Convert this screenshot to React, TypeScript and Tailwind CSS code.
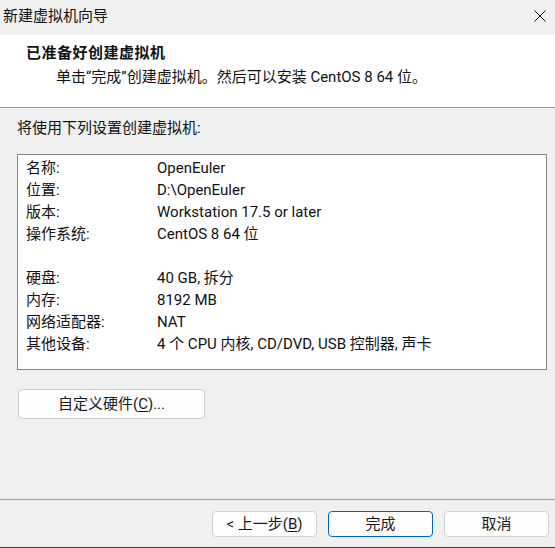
const rows: [string, string][] = [
  ["名称:", "OpenEuler"],
  ["位置:", "D:\\OpenEuler"],
  ["版本:", "Workstation 17.5 or later"],
  ["操作系统:", "CentOS 8 64 位"],
  ["", ""],
  ["硬盘:", "40 GB, 拆分"],
  ["内存:", "8192 MB"],
  ["网络适配器:", "NAT"],
  ["其他设备:", "4 个 CPU 内核, CD/DVD, USB 控制器, 声卡"],
];

function WinButton({ children, primary }: { children: React.ReactNode; primary?: boolean }) {
  return (
    <button
      className={
        primary
          ? "w-[105px] h-[26px] rounded-[4px] border border-[#0067c0] bg-[#fdfdfd] text-[15px] leading-none text-[#1a1a1a]"
          : "w-[105px] h-[26px] rounded-[4px] border border-[#d0d0d0] bg-[#fdfdfd] text-[15px] leading-none text-[#1a1a1a]"
      }
    >
      {children}
    </button>
  );
}

export default function App() {
  return (
    <div
      className="w-[555px] h-[548px] bg-[#f0f0f0] flex flex-col text-[#111] text-[15px] border-b border-[#3c3c3c] overflow-hidden"
      style={{ fontFamily: 'Roboto, "Noto Sans CJK SC", sans-serif' }}
    >
      {/* title bar */}
      <div className="h-[35px] flex items-center justify-between pl-[3px] pr-[9px] bg-[#f0f0f0]">
        <span className="leading-[22px] -mt-[3px]">新建虚拟机向导</span>
        <svg width="12" height="12" viewBox="0 0 12 12" className="-mt-[3px]">
          <path d="M0.5 0.5 L11.5 11.5 M11.5 0.5 L0.5 11.5" stroke="#1a1a1a" strokeWidth="1" fill="none" />
        </svg>
      </div>

      {/* header */}
      <div className="h-[73px] bg-white border-b border-[#a0a0a0] pt-[7px] pl-[26px] flex flex-col gap-[2px]">
        <div className="leading-[22px] font-bold tracking-[0.5px]">已准备好创建虚拟机</div>
        <div className="leading-[22px] pl-[30px]">单击“完成”创建虚拟机。然后可以安装 CentOS 8 64 位。</div>
      </div>

      {/* body */}
      <div className="flex-1 flex flex-col pt-[9px] pl-[17px] pr-[8px]">
        <div className="leading-[22px]">将使用下列设置创建虚拟机:</div>
        <div className="mt-[15px] h-[216px] border border-[#828790] bg-white pt-[2px] pl-[8px]">
          {rows.map(([k, v], i) => (
            <div key={i} className="flex h-[22px] leading-[22px]">
              <span className="w-[131px] shrink-0">{k}</span>
              <span>{v}</span>
            </div>
          ))}
        </div>
        <button className="mt-[19px] ml-px w-[187px] h-[30px] rounded-[4px] border border-[#d0d0d0] bg-[#fdfdfd] text-[15px] leading-none text-[#1a1a1a]">
          自定义硬件(<span className="underline underline-offset-2">C</span>)...
        </button>
      </div>

      {/* footer */}
      <div className="h-[48px] border-t border-[#a0a0a0] pt-[11px] pr-[6px] flex justify-end gap-[11px]">
        <WinButton>
          &lt; 上一步(<span className="underline underline-offset-2">B</span>)
        </WinButton>
        <WinButton primary>完成</WinButton>
        <WinButton>取消</WinButton>
      </div>
    </div>
  );
}
